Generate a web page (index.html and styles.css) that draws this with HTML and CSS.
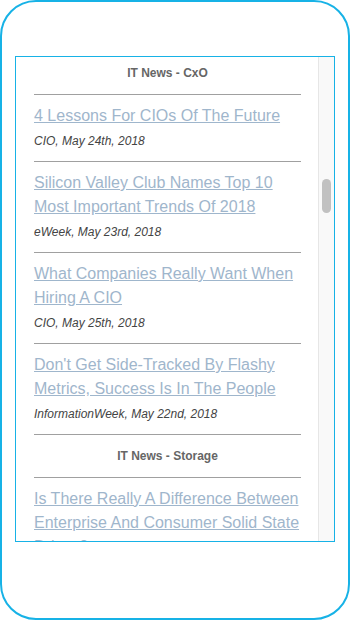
FILE: index.html
```html
<!DOCTYPE html>
<html>
<head>
<meta charset="utf-8">
<link rel="stylesheet" href="styles.css">
</head>
<body>
<div class="phone">
  <div class="widget">
    <div class="feed">
      <div class="section-title first">IT News - CxO</div>
      <div class="item">
        <a class="headline" href="#">4 Lessons For CIOs Of The Future</a>
        <div class="meta">CIO, May 24th, 2018</div>
      </div>
      <div class="item">
        <a class="headline" href="#">Silicon Valley Club Names Top 10 Most Important Trends Of 2018</a>
        <div class="meta">eWeek, May 23rd, 2018</div>
      </div>
      <div class="item">
        <a class="headline" href="#">What Companies Really Want When Hiring A CIO</a>
        <div class="meta">CIO, May 25th, 2018</div>
      </div>
      <div class="item">
        <a class="headline" href="#">Don't Get Side-Tracked By Flashy Metrics, Success Is In The People</a>
        <div class="meta">InformationWeek, May 22nd, 2018</div>
      </div>
      <div class="section-title">IT News - Storage</div>
      <div class="item">
        <a class="headline" href="#">Is There Really A Difference Between Enterprise And Consumer Solid State Drives?</a>
        <div class="meta">Forbes, May 21st, 2018</div>
      </div>
    </div>
    <div class="track"><div class="thumb"></div></div>
  </div>
</div>
</body>
</html>
```
FILE: styles.css
```css
* { box-sizing: border-box; }
html, body { margin: 0; padding: 0; background: #fff; }
body { font-family: "Liberation Sans", Arial, Helvetica, sans-serif; }

.phone {
  width: 350px;
  height: 620px;
  border: 2px solid #17b2e6;
  border-radius: 36px;
  padding: 54px 0 0 13px;
}

.widget {
  width: 320px;
  height: 486px;
  border: 1px solid #17b2e6;
  display: flex;
  overflow: hidden;
}

.feed {
  flex: 1;
  padding: 0 17px 0 18px;
  overflow: hidden;
}

.section-title {
  font-size: 12px;
  font-weight: bold;
  line-height: 16px;
  color: #666;
  text-align: center;
  padding: 13px 0;
  border-bottom: 1px solid #a0a0a0;
}
.section-title.first { padding-top: 8px; }

.item {
  padding: 9px 0 11px;
  border-bottom: 1px solid #a0a0a0;
}

.headline {
  display: block;
  font-size: 16px;
  line-height: 24px;
  color: #9fb6cc;
  text-decoration: underline;
}

.meta {
  margin-top: 4px;
  font-size: 12px;
  line-height: 18px;
  font-style: italic;
  color: #444;
}

.track {
  width: 16px;
  flex: none;
  background: #f9f9f9;
  border-left: 1px solid #e6e6e6;
  padding: 122px 0 0 3px;
}

.thumb {
  width: 9px;
  height: 34px;
  border-radius: 5px;
  background: #c1c1c1;
}
```
